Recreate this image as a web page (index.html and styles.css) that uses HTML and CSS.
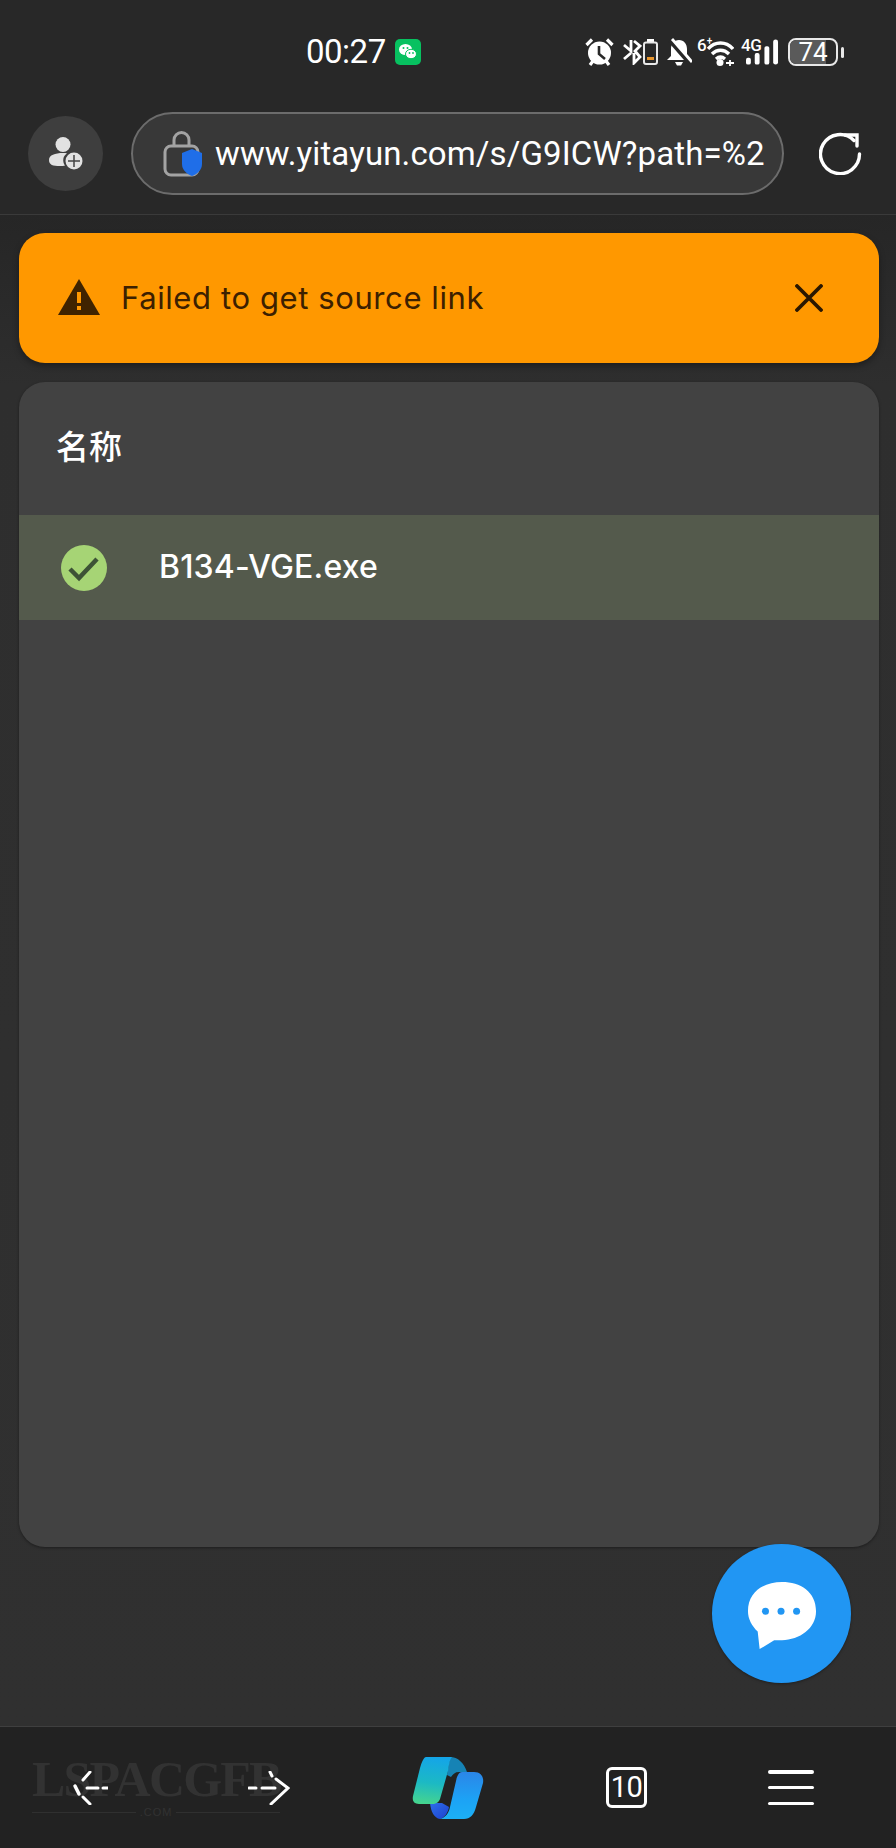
FILE: index.html
```html
<!DOCTYPE html>
<html lang="zh">
<head>
<meta charset="utf-8">
<title>B134-VGE.exe</title>
<link rel="stylesheet" href="styles.css">
</head>
<body>
<div class="phone">
  <header class="chrome">
    <div class="status">
      <span class="time">00:27</span>
      <svg class="wechat" viewBox="0 0 26 26"><rect width="26" height="26" rx="5" fill="#07c160"/><ellipse cx="10.500" cy="10.500" rx="6.500" ry="5.500" fill="#fff"/><ellipse cx="16" cy="15" rx="5.500" ry="4.700" fill="#fff" stroke="#07c160"/><circle cx="8.500" cy="9" r="1" fill="#07c160"/><circle cx="12.500" cy="9" r="1" fill="#07c160"/><circle cx="14.500" cy="14" r=".9" fill="#07c160"/><circle cx="18" cy="14" r=".9" fill="#07c160"/></svg>
      <div class="status-icons">
        <svg class="si-alarm" viewBox="0 0 29 28"><circle cx="14.500" cy="15" r="11.500" fill="#fff"/><path d="M14 8v8l6 5" fill="none" stroke="#282828" stroke-width="2.600"/><path d="M1.500 7 7 1.500M27.500 7 22 1.500M5 27l3-4M24 27l-3-4" stroke="#fff" stroke-width="3.200" fill="none"/></svg>
        <svg class="si-bt" viewBox="0 0 20 26"><path d="M9 1v11L2 6M9 14l-7 6M12 2l6 5-5 5 5 6-6 6V14" fill="none" stroke="#fff" stroke-width="2.800"/></svg>
        <svg class="si-batt" viewBox="0 0 15 26"><rect x="4" y="0" width="7" height="3" fill="#fff"/><rect x="1" y="3.500" width="13" height="21.500" rx="2" fill="#282828" stroke="#e8e8e8" stroke-width="2"/><rect x="4" y="18" width="7" height="3" fill="#e8962e"/></svg>
        <svg class="si-bell" viewBox="0 0 26 28"><path d="M13 2c5 0 8 4 8 9v7l4 4H1l4-4v-7c0-5 3-9 8-9z" fill="#fff"/><path d="M9 24h8l-2 3.500h-4z" fill="#fff"/><path d="M4 2l20 23" stroke="#282828" stroke-width="5"/><path d="M6 1l20 23" stroke="#fff" stroke-width="2.800"/></svg>
        <div class="si-wifi-wrap">
          <span class="si-six">6<sup>+</sup></span>
          <svg class="si-wifi" viewBox="0 0 27 27"><path d="M1 10C8 2 19 2 26 10M5 15c5-5 12-5 17 0M9 20c3-2.500 6-2.500 9 0" fill="none" stroke="#fff" stroke-width="3.400"/><circle cx="13" cy="23.500" r="3.500" fill="#fff"/><path d="M19 24h8M23 21v6" stroke="#fff" stroke-width="1.800"/></svg>
        </div>
        <div class="si-sig-wrap">
          <span class="si-4g">4G</span>
          <svg class="si-sig" viewBox="0 0 34 26"><rect x="0" y="19" width="5" height="7" rx="2" fill="#fff"/><rect x="9" y="14" width="5" height="12" rx="2" fill="#fff"/><rect x="19" y="7" width="5" height="19" rx="2" fill="#fff"/><rect x="28" y="0" width="5" height="26" rx="2.500" fill="#fff"/></svg>
        </div>
        <div class="battery"><div class="battery-fill"></div><span class="battery-num">74</span></div>
        <span class="battery-nub"></span>
      </div>
    </div>
    <div class="toolbar">
      <div class="avatar">
        <svg viewBox="0 0 36 36" class="avatar-icon"><circle cx="15" cy="8.500" r="7.500" fill="#e2e2e2"/><path d="M1 24c0-5 6-7 14-7 2 0 3 0 4 .5-4 2-5 8-2 12-1 .5-3 .5-5 .5-7 0-11-1-11-6z" fill="#e2e2e2"/><circle cx="26" cy="25" r="8.500" fill="#e2e2e2"/><path d="M26 19v12M20 25h12" stroke="#444" stroke-width="1.500"/></svg>
      </div>
      <div class="url-pill">
        <svg class="lock" viewBox="0 0 40 46"><path d="M11 15V9a7.500 7.500 0 0 1 15 0v6" fill="none" stroke="#a3a3a3" stroke-width="3"/><rect x="2" y="15" width="33" height="29" rx="6" fill="none" stroke="#a3a3a3" stroke-width="3"/><path d="M29 18l10 4v11c0 6-5 10-10 12-5-2-10-6-10-12V22z" fill="#1f6ee8"/></svg>
        <span class="url-text">www.yitayun.com/s/G9ICW?path=%2</span>
      </div>
      <svg class="reload" viewBox="0 0 44 44"><path d="M35 9.500A19.500 19.500 0 1 0 40.500 23" fill="none" stroke="#fff" stroke-width="3.400" stroke-linecap="round"/><path d="M26 4h12v11" fill="none" stroke="#fff" stroke-width="3.400" stroke-linecap="round"/></svg>
    </div>
  </header>
  <main class="content">
    <div class="alert">
      <svg class="warn" viewBox="0 0 42 36"><path d="M21 0 42 36H0z" fill="#3f2300"/><path d="M19 13h4v11h-4zM19 27h4v4h-4z" fill="#ff9800"/></svg>
      <span class="alert-text">Failed to get source link</span>
      <svg class="close" viewBox="0 0 28 28"><path d="M2 2l24 24M26 2 2 26" stroke="#2a1700" stroke-width="3.800" stroke-linecap="round"/></svg>
    </div>
    <section class="card">
      <div class="card-head">名称</div>
      <div class="row">
        <svg class="check" viewBox="0 0 46 46"><circle cx="23" cy="23" r="23" fill="#a6d475"/><path d="M9 24l9 9L36 14" fill="none" stroke="#3d5236" stroke-width="4.500"/></svg>
        <span class="row-text">B134-VGE.exe</span>
      </div>
    </section>
  </main>
  <button class="fab" type="button" aria-label="chat">
    <svg viewBox="0 0 72 72" class="fab-icon"><path d="M36 1c19 0 35 10 35 30 0 18-17 29-35 30-3 0-6 0-8 0L13 70 11 52C5 46 1 39 1 31 1 11 17 1 36 1z" fill="#fff"/><circle cx="19" cy="31" r="3.600" fill="#2196f3"/><circle cx="35" cy="31" r="3.600" fill="#2196f3"/><circle cx="51" cy="31" r="3.600" fill="#2196f3"/></svg>
  </button>
  <nav class="bottom">
    <div class="watermark">
      <div class="wm-main">LSPACGFB</div>
      <div class="wm-sub"><span class="wm-line"></span><span class="wm-com">.COM</span><span class="wm-line"></span></div>
    </div>
    <svg class="nav-arrow" viewBox="0 0 36 34"><path d="M18 1 11 9M11 26l7 7M15 17h11M31 17h5" fill="none" stroke="#fff" stroke-width="3" stroke-linecap="round"/><path d="M3 15l4 8" stroke="#fff" stroke-width="3.500" stroke-linecap="round"/></svg>
    <svg class="nav-arrow nav-fwd" viewBox="0 0 42 34"><path d="M1 17h7M14 17h13M22 1l2 4M28 8l12 9-17 16" fill="none" stroke="#fff" stroke-width="3" stroke-linecap="round"/></svg>
    <svg class="copilot" viewBox="0 0 72 62">
      <defs>
        <linearGradient id="cpA" x1="0.500" y1="0" x2="0.400" y2="1"><stop offset="0" stop-color="#14a5e8"/><stop offset=".55" stop-color="#1cb9c4"/><stop offset="1" stop-color="#45d48f"/></linearGradient>
        <linearGradient id="cpB" x1="0.500" y1="0" x2="0.500" y2="1"><stop offset="0" stop-color="#2b86e8"/><stop offset=".6" stop-color="#1ca3f5"/><stop offset="1" stop-color="#1cb0f5"/></linearGradient>
        <linearGradient id="cpC" x1="0" y1="0" x2="1" y2="1"><stop offset="0" stop-color="#2d6fe8"/><stop offset="1" stop-color="#1d3fd0"/></linearGradient>
      </defs>
      <path d="M38 0C46 0 52 6 55 15H47C43 15 41 17 39 20L35 18z" fill="#1683b5"/>
      <path d="M18 46H30L37 50C36 56 32 61 28 62C22 61 19 55 18 46Z" fill="url(#cpC)"/>
      <path d="M14 0H40C37 3 37 10 36 14L28 42C27 45 24 47 20 47H7C2 47 0 44 1 39L8 11C10 4 12 0 14 0Z" fill="url(#cpA)"/>
      <path d="M50 15H62C69 15 72 20 71 26L64 50C62 58 58 62 52 62H28C33 61 37 56 38 50L44 24C45 19 47 15 50 15Z" fill="url(#cpB)"/>
    </svg>
    <div class="tabs">10</div>
    <div class="menu"><span class="menu-bar"></span><span class="menu-bar"></span><span class="menu-bar"></span></div>
  </nav>
</div>
</body>
</html>
```
FILE: styles.css
```css
* { box-sizing: border-box; }
html, body { margin: 0; padding: 0; }
body { background: #2f2f2f; font-family: "Inter", "Noto Sans CJK SC", sans-serif; color: #fff; }
.phone { position: relative; width: 896px; height: 1848px; display: flex; flex-direction: column; overflow: hidden; }

.chrome { height: 215px; flex: none; background: #282828; border-bottom: 1px solid #3a3a3a; }
.status { height: 100px; display: flex; align-items: flex-start; padding: 4px 0 0 306px; }
.time { font: 400 33px/38px "Roboto", sans-serif; margin-top: 29px; letter-spacing: -.5px; width: 80px; }
.wechat { width: 26px; height: 26px; margin: 35px 0 0 9px; flex: none; }
.status-icons { display: flex; align-items: center; margin: 33px 0 0 164px; height: 30px; }
.si-alarm { width: 29px; height: 28px; }
.si-bt { width: 20px; height: 26px; margin-left: 8px; }
.si-batt { width: 15px; height: 26px; margin-left: 1px; }
.si-bell { width: 26px; height: 28px; margin-left: 8px; }
.si-wifi-wrap { position: relative; width: 37px; height: 28px; margin-left: 5px; }
.si-six { position: absolute; left: 0; top: -2px; font: 500 17px/18px "Roboto", sans-serif; }
.si-six sup { font-size: 10px; line-height: 0; }
.si-wifi { position: absolute; left: 10px; top: 1px; width: 27px; height: 27px; }
.si-sig-wrap { position: relative; width: 38px; height: 28px; margin-left: 7px; }
.si-4g { position: absolute; left: 0; top: -2px; font: 500 17px/18px "Roboto", sans-serif; letter-spacing: -.5px; }
.si-sig { position: absolute; left: 5px; top: 1px; width: 33px; height: 26px; }
.battery { position: relative; width: 50px; height: 28px; margin-left: 9px; border: 2.500px solid #e8e8e8; border-radius: 8px; overflow: hidden; display: flex; align-items: center; justify-content: center; }
.battery-fill { position: absolute; left: 0; top: 0; bottom: 0; width: 78%; background: #5a5a5a; }
.battery-num { position: relative; font: 400 26px/1 "Roboto", sans-serif; }
.battery-nub { width: 3px; height: 11px; margin-left: 3px; background: #e8e8e8; border-radius: 2px; }

.toolbar { height: 114px; display: flex; align-items: flex-start; padding: 12px 0 0 28px; }
.avatar { width: 75px; height: 75px; margin-top: 4px; flex: none; border-radius: 50%; background: #3e3e3e; display: flex; align-items: center; justify-content: center; }
.avatar-icon { width: 36px; height: 36px; }
.url-pill { width: 653px; height: 83px; margin-left: 28px; flex: none; border: 2px solid #6c6c6c; border-radius: 42px; background: #383838; display: flex; align-items: center; padding-left: 30px; }
.lock { width: 40px; height: 46px; flex: none; }
.url-text { margin-left: 12px; font: 400 33px/40px "Roboto", sans-serif; white-space: nowrap; letter-spacing: .12px; }
.reload { width: 44px; height: 44px; margin: 19px 0 0 35px; flex: none; }

.content { flex: 1; min-height: 0; padding: 18px 17px 0 19px; display: flex; flex-direction: column; gap: 19px; background: linear-gradient(#262626 0, #2e2e2e 170px, #303030 100%); }
.alert { height: 130px; flex: none; display: flex; align-items: center; padding: 0 56px 0 39px; background: #ff9800; border-radius: 26px; color: #3c2000; box-shadow: 0 3px 6px rgba(0,0,0,.35); }
.warn { width: 42px; height: 36px; flex: none; margin-top: -2px; }
.alert-text { flex: 1; margin-left: 21px; font: 400 31px/40px "Inter", sans-serif; letter-spacing: .6px; }
.close { width: 28px; height: 28px; flex: none; }

.card { height: 1165px; flex: none; background: #424242; border-radius: 26px; box-shadow: 0 1px 3px rgba(0,0,0,.4); overflow: hidden; }
.card-head { height: 133px; padding: 43px 0 0 37px; font: 500 33px/40px "Noto Sans CJK SC", sans-serif; }
.row { height: 105px; display: flex; align-items: center; padding-left: 42px; background: #545a4c; }
.check { width: 46px; height: 46px; flex: none; }
.row-text { margin-left: 52px; margin-top: -2px; font: 500 32px/40px "Inter", sans-serif; letter-spacing: .15px; }

.fab { position: absolute; left: 712px; top: 1544px; width: 139px; height: 139px; padding: 0; border: 0; border-radius: 50%; background: #2196f3; box-shadow: 0 1px 3px rgba(0,0,0,.35); display: flex; align-items: center; justify-content: center; }
.fab-icon { width: 70px; height: 70px; margin-top: 5px; }

.bottom { position: relative; height: 122px; flex: none; background: #222; border-top: 1px solid #3f3f3f; display: flex; align-items: center; padding-left: 72px; }
.watermark { position: absolute; left: 32px; top: 30px; width: 248px; color: #323232; }
.wm-main { font: 700 50px/44px "Liberation Serif", serif; white-space: nowrap; letter-spacing: -1.800px; }
.wm-sub { display: flex; align-items: center; gap: 4px; margin-top: 6px; }
.wm-line { flex: 1; height: 1px; background: #303030; }
.wm-com { font: 400 11px/11px "Liberation Sans", sans-serif; letter-spacing: 1px; }
.nav-arrow { position: relative; width: 36px; height: 34px; flex: none; }
.nav-fwd { width: 42px; margin-left: 140px; }
.copilot { width: 72px; height: 62px; flex: none; margin-left: 122px; }
.tabs { width: 41px; height: 41px; margin-left: 122px; flex: none; border: 3px solid #fff; border-radius: 6px; display: flex; align-items: center; justify-content: center; font: 400 29px/1 "Roboto", sans-serif; letter-spacing: -.5px; }
.menu { width: 46px; height: 35px; margin-left: 121px; flex: none; display: flex; flex-direction: column; justify-content: space-between; }
.menu-bar { height: 3.500px; border-radius: 2px; background: #fff; }
```
